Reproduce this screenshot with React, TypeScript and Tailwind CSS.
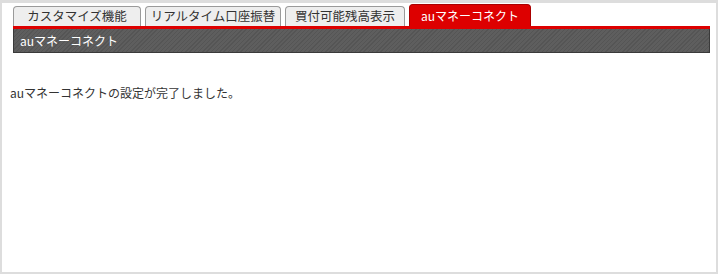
const tabs = [
  { label: 'カスタマイズ機能', w: 'w-[128px]' },
  { label: 'リアルタイム口座振替', w: 'w-[136px]' },
  { label: '買付可能残高表示', w: 'w-[120px]' },
]

export default function App() {
  return (
    <div
      className="w-[718px] h-[274px] bg-[#dddddd] p-[2px] pt-[3px]"
      style={{ fontFamily: '"Noto Sans CJK JP", "Noto Sans", sans-serif' }}
    >
      <div className="h-full bg-white pl-[8px] pr-[6px] pt-[1px]">
        <div className="ml-[3px]">
          <div className="flex items-end gap-[4px] h-[22px]">
            {tabs.map((t) => (
              <div
                key={t.label}
                className={`${t.w} h-[20px] flex items-center justify-center border border-b-0 border-[#9a9a9a] rounded-t-[4px] bg-[#eeeeee] text-[12.5px] leading-none text-[#333]`}
              >
                {t.label}
              </div>
            ))}
            <div className="h-[22px] w-[122px] flex items-center justify-center rounded-t-[4px] bg-[#dd0000] text-[12px] leading-none text-white border border-b-0 border-[#aa0000]">
              auマネーコネクト
            </div>
          </div>
          <div className="border-t-[3px] border-[#dd0000]">
            <div className="h-[24px] flex items-center pl-[6px] text-[12px] text-white border border-t-0 border-[#3a3a3a] bg-[repeating-linear-gradient(135deg,#5e5e5e_0px,#5e5e5e_2px,#555555_2px,#555555_3px)]">
              auマネーコネクト
            </div>
          </div>
        </div>
        <p className="mt-[34px] text-[12px] leading-none text-[#333]">
          auマネーコネクトの設定が完了しました。
        </p>
      </div>
    </div>
  )
}
